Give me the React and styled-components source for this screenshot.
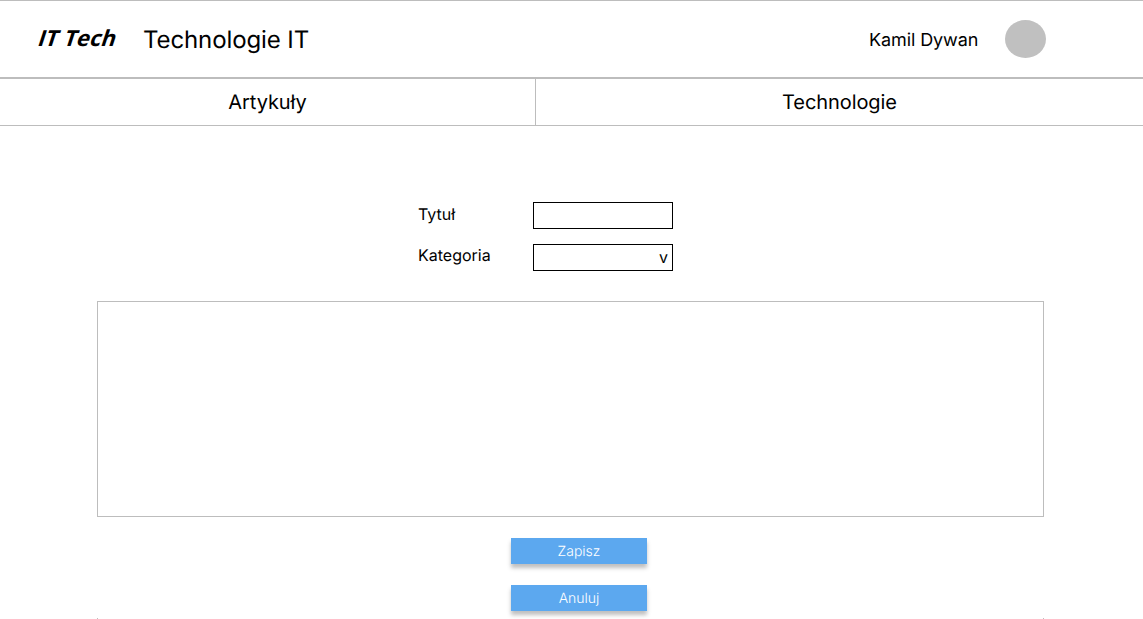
import React from "react";
import styled, { createGlobalStyle } from "styled-components";

const GlobalStyle = createGlobalStyle`
  * { box-sizing: border-box; }
  html, body { margin: 0; background: #fff; }
  body {
    overflow: hidden;
    color: #000;
    font-family: Inter, "Liberation Sans", sans-serif;
    text-rendering: geometricPrecision;
  }
`;

const Page = styled.div`
  width: 1143px;
  height: 619px;
  display: flex;
  flex-direction: column;
  overflow: hidden;
`;

const Header = styled.header`
  height: 79px;
  flex: none;
  display: flex;
  align-items: flex-start;
  border-top: 1px solid #bdbdbd;
  border-bottom: 2px solid #bdbdbd;
`;

const Logo = styled.div`
  width: 104px;
  margin: 20px 0 0 39px;
  font: 700 22px/34px "Open Sans", sans-serif;
  letter-spacing: 0.1px;
  white-space: nowrap;
  transform: skewX(-18deg);
`;

const Title = styled.h1`
  margin: 22px 0 0;
  font-size: 24px;
  font-weight: 400;
  line-height: 34px;
  letter-spacing: -0.1px;
  white-space: nowrap;
`;

const User = styled.div`
  display: flex;
  margin: 19px 97px 0 auto;
`;

const UserName = styled.span`
  width: 136px;
  font-size: 18px;
  line-height: 42px;
  letter-spacing: -0.1px;
  height: 38px;
  white-space: nowrap;
`;

const Avatar = styled.div`
  width: 41px;
  height: 38px;
  border-radius: 50%;
  background: #c0c0c0;
`;

const Nav = styled.nav`
  height: 47px;
  flex: none;
  display: grid;
  grid-template-columns: 536px 1fr;
  border-bottom: 1px solid #bdbdbd;
`;

const NavLink = styled.a`
  font-size: 20px;
  line-height: 46px;
  letter-spacing: -0.08px;
  text-align: center;
  border-right: ${(p) => (p.$divided ? "1px solid #bdbdbd" : "0")};
`;

const Form = styled.form`
  flex: none;
  display: flex;
  flex-direction: column;
  padding: 76px 99px 0 97px;
`;

const Field = styled.label`
  display: flex;
  height: 27px;
  margin: 0 0 15px 321px;
`;

const FieldName = styled.span`
  width: 115px;
  font-size: 16px;
  line-height: ${(p) => p.$line || 25}px;
`;

const Control = styled.div`
  display: flex;
  justify-content: flex-end;
  width: 140px;
  height: 27px;
  padding-right: 4px;
  border: 1px solid #000;
  font-size: 16px;
  font-weight: 400;
  line-height: 24px;
`;

const Editor = styled.div`
  height: 216px;
  margin-top: 15px;
  border: 1px solid #bdbdbd;
`;

const Actions = styled.div`
  display: flex;
  flex-direction: column;
  gap: 21px;
  margin: 21px 0 0 414px;
`;

const Button = styled.button`
  width: 136px;
  height: 26px;
  padding: 1px 0 0;
  border: 0;
  background: #5ca8ef;
  color: #fff;
  font: 350 14px/25px Inter, sans-serif;
  text-rendering: geometricPrecision;
  box-shadow: 0 4px 4px rgba(0, 0, 0, 0.25);
`;

const NextPanel = styled.div`
  flex: none;
  height: 20px;
  margin: 7px 99px 0 97px;
  border: solid #bdbdbd;
  border-width: 0 1px;
`;

export default function App() {
  return (
    <Page>
      <GlobalStyle />
      <Header>
        <Logo>IT Tech</Logo>
        <Title>Technologie IT</Title>
        <User>
          <UserName>Kamil Dywan</UserName>
          <Avatar />
        </User>
      </Header>
      <Nav>
        <NavLink $divided>Artykuły</NavLink>
        <NavLink>Technologie</NavLink>
      </Nav>
      <Form>
        <Field>
          <FieldName>Tytuł</FieldName>
          <Control />
        </Field>
        <Field>
          <FieldName $line={23}>Kategoria</FieldName>
          <Control>v</Control>
        </Field>
        <Editor />
        <Actions>
          <Button type="button">Zapisz</Button>
          <Button type="button">Anuluj</Button>
        </Actions>
      </Form>
      <NextPanel />
    </Page>
  );
}
